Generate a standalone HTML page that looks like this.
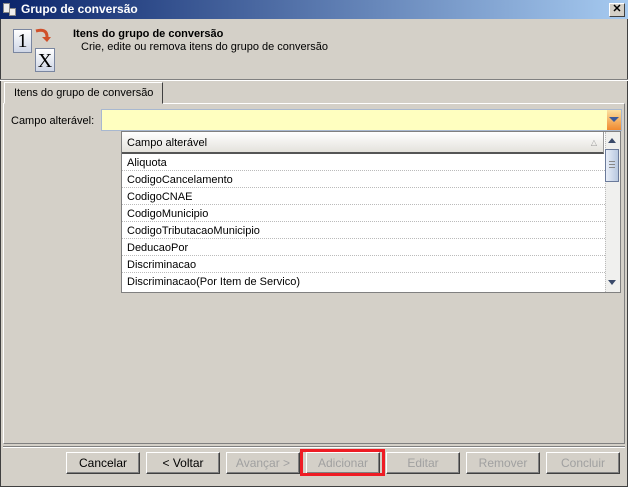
<!DOCTYPE html>
<html><head><meta charset="utf-8"><style>
*{box-sizing:border-box;margin:0;padding:0}
body{width:628px;height:487px;background:#d4d0c8;font:12px "Liberation Sans",sans-serif;position:relative;overflow:hidden;color:#000}
.abs{position:absolute}
.title{left:0;top:0;width:628px;height:19px;background:linear-gradient(90deg,#0a246a,#a6caf0);color:#fff;font-weight:bold;font-size:12px;line-height:19px;padding-left:21px}
.btn{position:absolute;top:452px;width:74px;height:22px;background:#d4d0c8;border:1px solid;border-color:#fff #404040 #404040 #fff;box-shadow:inset -1px -1px #808080;text-align:center;line-height:20px;color:#a0a0a0}
.row{position:absolute;left:122px;width:483px;height:17px;border-bottom:1px dotted #bbb;padding-left:5px;line-height:18px;font-size:11px;background:#fff}
</style></head><body>
<div class="abs" style="left:0;top:0;width:628px;height:487px;border:1px solid #404040;border-top:none"></div>
<div class="abs title">Grupo de conversão</div>
<div class="abs" style="left:3px;top:3px;width:7px;height:10px;background:#eee;border:1px solid #888"></div>
<div class="abs" style="left:9px;top:8px;width:7px;height:8px;background:#eee;border:1px solid #888"></div>
<div class="abs" style="left:609px;top:3px;width:16px;height:14px;background:#d4d0c8;border:1px solid;border-color:#fff #404040 #404040 #fff;font-size:11px;line-height:11px;text-align:center;font-weight:bold">✕</div>
<div class="abs" style="left:13px;top:29px;width:19px;height:24px;background:linear-gradient(#fff,#cfd6e6);border:1px solid #7a86a0;font:20px 'Liberation Serif',serif;text-align:center;line-height:22px">1</div>
<div class="abs" style="left:35px;top:48px;width:20px;height:24px;background:linear-gradient(#fff,#cfd6e6);border:1px solid #7a86a0;font:20px 'Liberation Serif',serif;text-align:center;line-height:24px">X</div>
<svg class="abs" style="left:33px;top:27px" width="20" height="20"><path d="M3 4 Q14 1 14 10" stroke="#d0502a" stroke-width="3" fill="none"/><path d="M9 10 L18 10 L14 15Z" fill="#d0502a"/></svg>
<div class="abs" style="left:73px;top:28px;font-weight:bold;font-size:11px">Itens do grupo de conversão</div>
<div class="abs" style="left:81px;top:41px;font-size:11px">Crie, edite ou remova itens do grupo de conversão</div>
<div class="abs" style="left:0;top:79px;width:628px;height:2px;border-top:1px solid #808080;border-bottom:1px solid #fff"></div>
<div class="abs" style="left:3px;top:103px;width:622px;height:341px;border:1px solid;border-color:#fff #808080 #808080 #fff"></div>
<div class="abs" style="left:4px;top:82px;width:159px;height:22px;background:#d4d0c8;border:1px solid;border-color:#fff #404040 transparent #fff;font-size:11px;line-height:20px;padding-left:9px">Itens do grupo de conversão</div>
<div class="abs" style="left:11px;top:115px;font-size:11px">Campo alterável:</div>
<div class="abs" style="left:101px;top:109px;width:521px;height:22px;background:#ffffc0;border:1px solid #a8b8d0"></div>
<div class="abs" style="left:607px;top:110px;width:14px;height:20px;background:linear-gradient(#fbe0a0,#f08a30)"></div>
<svg class="abs" style="left:609px;top:117px" width="10" height="6"><path d="M0 0H10L5 5Z" fill="#3a5a9a"/></svg>
<div class="abs" style="left:121px;top:131px;width:500px;height:162px;border:1px solid #808080;background:#fff"></div>
<div class="abs" style="left:122px;top:132px;width:482px;height:22px;background:linear-gradient(#fff,#e4e2dc);border-bottom:2px solid #555;border-right:1px solid #999;padding-left:5px;line-height:22px;font-size:11px">Campo alterável<span style="position:absolute;right:6px;color:#999;font-size:8px">△</span></div>
<div class="row" style="top:154px">Aliquota</div>
<div class="row" style="top:171px">CodigoCancelamento</div>
<div class="row" style="top:188px">CodigoCNAE</div>
<div class="row" style="top:205px">CodigoMunicipio</div>
<div class="row" style="top:222px">CodigoTributacaoMunicipio</div>
<div class="row" style="top:239px">DeducaoPor</div>
<div class="row" style="top:256px">Discriminacao</div>
<div class="row" style="top:273px;border:none;height:19px">Discriminacao(Por Item de Servico)</div>
<div class="abs" style="left:605px;top:132px;width:15px;height:160px;background:#f0f0ee;border-left:1px dotted #bbb"></div>
<svg class="abs" style="left:608px;top:138px" width="9" height="5"><path d="M0 5H8L4 0Z" fill="#3a4a6a"/></svg>
<div class="abs" style="left:605px;top:149px;width:14px;height:33px;background:linear-gradient(90deg,#e8eef8,#b8c8e0);border:1px solid #6a7a9a"></div>
<div class="abs" style="left:609px;top:161px;width:6px;height:7px;border-top:1px solid #888;border-bottom:1px solid #888"></div>
<div class="abs" style="left:609px;top:164px;width:6px;height:1px;background:#888"></div>
<svg class="abs" style="left:608px;top:280px" width="9" height="5"><path d="M0 0H8L4 5Z" fill="#3a4a6a"/></svg>
<div class="abs" style="left:3px;top:446px;width:622px;height:2px;border-top:1px solid #808080;border-bottom:1px solid #fff"></div>
<div class="btn" style="left:66px;color:#000">Cancelar</div>
<div class="btn" style="left:146px;color:#000">&lt; Voltar</div>
<div class="btn" style="left:226px">Avançar &gt;</div>
<div class="btn" style="left:306px">Adicionar</div>
<div class="abs" style="left:300px;top:449px;width:85px;height:27px;border:3px solid #ee1c24"></div>
<div class="btn" style="left:386px">Editar</div>
<div class="btn" style="left:466px">Remover</div>
<div class="btn" style="left:546px">Concluir</div>
</body></html>
